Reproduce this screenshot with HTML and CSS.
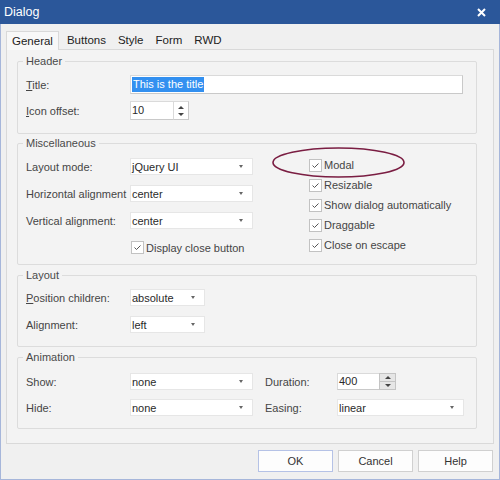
FILE: index.html
```html
<!DOCTYPE html>
<html lang="en">
<head>
    <meta charset="UTF-8">
    <title>Dialog</title>
    <link rel="stylesheet" href="styles.css">
</head>
<body>
    <div class="window">
        <div class="titlebar">
            <span class="title">Dialog</span>
            <svg class="close" width="9" height="9" viewBox="0 0 9 9">
                <path d="M1 1L8 8M8 1L1 8" stroke="#fff" stroke-width="2"/>
            </svg>
        </div>

        <div class="client">
            <div class="tabs">
                <span class="tab active">General</span>
                <span class="tab">Buttons</span>
                <span class="tab">Style</span>
                <span class="tab">Form</span>
                <span class="tab">RWD</span>
            </div>

            <div class="panel">
                <!-- Header -->
                <fieldset class="group group-header">
                    <legend>Header</legend>
                    <div class="row first">
                        <span class="label"><u>T</u>itle:</span>
                        <div class="textbox title-box"><span class="selected">This is the title</span></div>
                    </div>
                    <div class="row">
                        <span class="label"><u>I</u>con offset:</span>
                        <div class="textbox num-box">10</div>
                        <div class="spin-plain">
                            <i class="caret-up"></i>
                            <i class="caret-down"></i>
                        </div>
                    </div>
                </fieldset>

                <!-- Miscellaneous -->
                <fieldset class="group group-misc">
                    <legend>Miscellaneous</legend>
                    <div class="cols">
                        <div class="col-left">
                            <div class="row">
                                <span class="label">Layout mode:</span>
                                <div class="select w-wide"><span>jQuery UI</span><i class="caret-down"></i></div>
                            </div>
                            <div class="row">
                                <span class="label">Horizontal alignment</span>
                                <div class="select w-wide"><span>center</span><i class="caret-down"></i></div>
                            </div>
                            <div class="row">
                                <span class="label">Vertical alignment:</span>
                                <div class="select w-wide"><span>center</span><i class="caret-down"></i></div>
                            </div>
                            <div class="row check-row indent">
                                <span class="box"><svg width="11" height="11" viewBox="0 0 11 11"><path d="M2.5 5.5L4.5 7.5L8.5 3.5" fill="none" stroke="#555" stroke-width="1"/></svg></span>
                                <span>Display close button</span>
                            </div>
                        </div>

                        <div class="col-right">
                            <svg class="annot" width="135" height="33" viewBox="0 0 135 33">
                                <ellipse cx="67.5" cy="16.5" rx="65.5" ry="14.5" fill="none" stroke="#7a1d42" stroke-width="1.6"/>
                            </svg>
                            <div class="check-row tall">
                                <span class="box"><svg width="11" height="11" viewBox="0 0 11 11"><path d="M2.5 5.5L4.5 7.5L8.5 3.5" fill="none" stroke="#555" stroke-width="1"/></svg></span>
                                <span>Modal</span>
                            </div>
                            <div class="check-row tall">
                                <span class="box"><svg width="11" height="11" viewBox="0 0 11 11"><path d="M2.5 5.5L4.5 7.5L8.5 3.5" fill="none" stroke="#555" stroke-width="1"/></svg></span>
                                <span>Resizable</span>
                            </div>
                            <div class="check-row tall">
                                <span class="box"><svg width="11" height="11" viewBox="0 0 11 11"><path d="M2.5 5.5L4.5 7.5L8.5 3.5" fill="none" stroke="#555" stroke-width="1"/></svg></span>
                                <span>Show dialog automatically</span>
                            </div>
                            <div class="check-row tall">
                                <span class="box"><svg width="11" height="11" viewBox="0 0 11 11"><path d="M2.5 5.5L4.5 7.5L8.5 3.5" fill="none" stroke="#555" stroke-width="1"/></svg></span>
                                <span>Draggable</span>
                            </div>
                            <div class="check-row tall">
                                <span class="box"><svg width="11" height="11" viewBox="0 0 11 11"><path d="M2.5 5.5L4.5 7.5L8.5 3.5" fill="none" stroke="#555" stroke-width="1"/></svg></span>
                                <span>Close on escape</span>
                            </div>
                        </div>
                    </div>
                </fieldset>

                <!-- Layout -->
                <fieldset class="group group-layout">
                    <legend>Layout</legend>
                    <div class="row first">
                        <span class="label"><u>P</u>osition children:</span>
                        <div class="select w-short"><span>absolute</span><i class="caret-down"></i></div>
                    </div>
                    <div class="row">
                        <span class="label">Alignment:</span>
                        <div class="select w-short"><span>left</span><i class="caret-down"></i></div>
                    </div>
                </fieldset>

                <!-- Animation -->
                <fieldset class="group group-anim">
                    <legend>Animation</legend>
                    <div class="row first">
                        <span class="label">Show:</span>
                        <div class="select w-wide"><span>none</span><i class="caret-down"></i></div>
                        <span class="label-right">Duration:</span>
                        <div class="textbox dur-box">400</div>
                        <div class="spin-btns">
                            <span class="spin-btn"><i class="caret-up"></i></span>
                            <span class="spin-btn"><i class="caret-down"></i></span>
                        </div>
                    </div>
                    <div class="row">
                        <span class="label">Hide:</span>
                        <div class="select w-wide"><span>none</span><i class="caret-down"></i></div>
                        <span class="label-right">Easing:</span>
                        <div class="select w-easing"><span>linear</span><i class="caret-down"></i></div>
                    </div>
                </fieldset>
            </div>

            <div class="buttons">
                <button class="btn default">OK</button>
                <button class="btn">Cancel</button>
                <button class="btn">Help</button>
            </div>
        </div>
    </div>
</body>
</html>
```

FILE: styles.css
```css
body {
    margin: 0;
    font-family: "Liberation Sans", Arial, sans-serif;
    font-size: 11px;
    color: #454545;
    background: #f0f0f0;
}

.window {
    width: 500px;
    height: 480px;
    box-sizing: border-box;
    border: 1px solid #a6b6da;
    border-top: 0;
    background: #f0f0f0;
    display: flex;
    flex-direction: column;
}

.titlebar {
    height: 24px;
    margin: 0 -1px;
    padding: 0 14px 0 4px;
    background: #2b579a;
    color: #fff;
    display: flex;
    align-items: center;
    justify-content: space-between;
}

.titlebar .title {
    font-size: 12.5px;
}

.client {
    flex: 1;
    padding: 7px 5px 0 5px;
}

/* tabs */
.tabs {
    display: flex;
    height: 18px;
    position: relative;
    z-index: 1;
}

.tab {
    padding: 0 6px;
    line-height: 18px;
    color: #222;
    font-size: 11.5px;
}

.tab.active {
    height: 18px;
    padding: 0 5px;
    border: 1px solid #d9d9d9;
    border-bottom: 0;
    background: #f8f8f8;
    margin-right: 2px;
}

.panel {
    height: 395px;
    box-sizing: border-box;
    border: 1px solid #d9d9d9;
    background: #f3f3f3;
    padding: 5px 16px 0 10px;
}

/* groups */
.group {
    margin: 4px 0 0 0;
    padding: 0 8px 12px 8px;
    border: 1px solid #dcdcdc;
    border-radius: 2px;
    min-width: 0;
}

.group legend {
    padding: 0 3px;
    margin-left: -3px;
    line-height: 13px;
    color: #4a4a4a;
}

.group-header {
    margin-top: 0;
    padding-bottom: 13px;
}

.group-misc {
    margin-top: 3px;
    padding-bottom: 8px;
}

.group-layout {
    padding-bottom: 13px;
}

.group-anim {
    padding-bottom: 12px;
}

.row {
    display: flex;
    align-items: center;
    margin-top: 7px;
}

.group-misc .row,
.group-layout .row {
    margin-top: 10px;
}

.group-layout .row.first {
    margin-top: 7px;
}

.group-anim .row {
    margin-top: 9px;
}

.group-misc .col-left .row:first-child {
    margin-top: 0;
}

.label {
    width: 104px;
    flex-shrink: 0;
    white-space: nowrap;
}

.label-right {
    width: 72px;
    margin-left: 12px;
    flex-shrink: 0;
}

/* inputs */
.textbox {
    height: 19px;
    box-sizing: border-box;
    background: #fff;
    border: 1px solid #dadada;
    border-right-color: #c9c9c9;
    border-bottom-color: #c9c9c9;
    padding: 0 1px;
    line-height: 17px;
    color: #2a2a2a;
}

.title-box {
    width: 333px;
}

.selected {
    background: #3390f0;
    color: #fff;
    display: inline-block;
    line-height: 15px;
    padding: 0 1px;
}

.num-box {
    width: 43px;
    border-right: 0;
}

.spin-plain {
    width: 16px;
    height: 19px;
    box-sizing: border-box;
    background: #fff;
    border: 1px solid #dadada;
    border-right-color: #c9c9c9;
    border-bottom-color: #c9c9c9;
    display: flex;
    flex-direction: column;
    align-items: center;
    justify-content: center;
    gap: 4px;
}

.dur-box {
    width: 42px;
    height: 17px;
    line-height: 15px;
    border-right: 0;
}

.spin-btns {
    width: 17px;
    height: 17px;
    display: flex;
    flex-direction: column;
}

.spin-btn {
    flex: 1;
    background: #e6e6e6;
    border: 1px solid #c4c4c4;
    display: flex;
    align-items: center;
    justify-content: center;
}

.spin-btn + .spin-btn {
    border-top: 0;
}

.caret-up,
.caret-down {
    display: block;
    width: 0;
    height: 0;
    border-left: 3px solid transparent;
    border-right: 3px solid transparent;
}

.caret-up {
    border-bottom: 3px solid #444;
}

.caret-down {
    border-top: 3px solid #444;
}

.select {
    height: 17px;
    box-sizing: border-box;
    background: #fff;
    border: 1px solid #e6e6e6;
    padding: 0 9px 0 1px;
    display: flex;
    align-items: center;
    justify-content: space-between;
    color: #2a2a2a;
}

.select .caret-down {
    border-top-color: #666;
    border-left-width: 2.5px;
    border-right-width: 2.5px;
    border-top-width: 3px;
}

.w-wide {
    width: 123px;
}

.w-short {
    width: 75px;
}

.w-easing {
    width: 127px;
}

/* checkboxes */
.cols {
    display: flex;
    margin-top: 5px;
}

.col-left {
    width: 227px;
    padding-top: 3px;
}

.col-right {
    margin-left: 56px;
    position: relative;
}

.check-row {
    display: flex;
    align-items: center;
    gap: 2px;
}

.check-row.indent {
    height: 17px;
    padding-left: 105px;
}

.check-row.tall {
    height: 20px;
}

.box {
    width: 13px;
    height: 13px;
    box-sizing: border-box;
    border: 1px solid #c2c2c2;
    background: #fff;
    display: flex;
    align-items: center;
    justify-content: center;
}

.annot {
    position: absolute;
    left: -38px;
    top: -9px;
}

/* bottom buttons */
.buttons {
    display: flex;
    justify-content: flex-end;
    gap: 5px;
    margin-top: 6px;
    padding-right: 1px;
}

.btn {
    width: 75px;
    height: 22px;
    background: #fdfdfd;
    border: 1px solid #d0d0d0;
    font-family: "Liberation Sans", Arial, sans-serif;
    font-size: 11px;
    color: #333;
    padding: 0;
}

.btn.default {
    border-color: #b5c2e6;
}
```
